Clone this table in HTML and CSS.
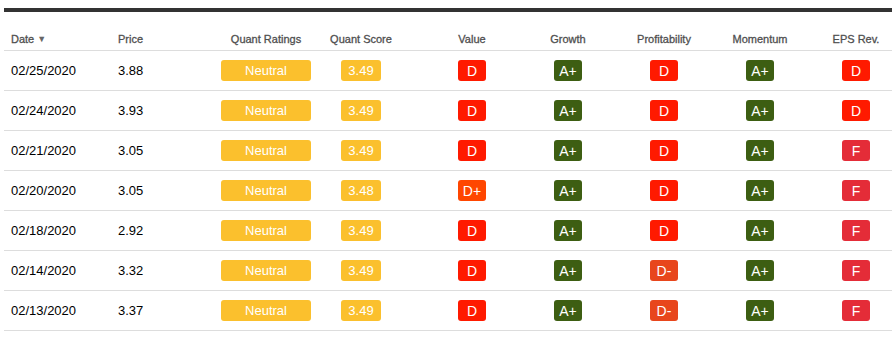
FILE: index.html
```html
<!DOCTYPE html>
<html>
<head>
<meta charset="utf-8">
<link rel="stylesheet" href="styles.css">
</head>
<body>
<div class="wrap">
  <div class="topbar"></div>
  <div class="grid head">
    <div class="cell left">Date <span class="caret">▼</span></div>
    <div class="cell left">Price</div>
    <div class="cell">Quant Ratings</div>
    <div class="cell qs">Quant Score</div>
    <div class="cell">Value</div>
    <div class="cell">Growth</div>
    <div class="cell">Profitability</div>
    <div class="cell">Momentum</div>
    <div class="cell">EPS Rev.</div>
  </div>

  <div class="grid row">
    <div class="cell left">02/25/2020</div><div class="cell left">3.88</div>
    <div class="cell"><span class="b neutral">Neutral</span></div>
    <div class="cell qs"><span class="b score">3.49</span></div>
    <div class="cell"><span class="b g d">D</span></div>
    <div class="cell"><span class="b g a">A+</span></div>
    <div class="cell"><span class="b g d">D</span></div>
    <div class="cell"><span class="b g a">A+</span></div>
    <div class="cell"><span class="b g d">D</span></div>
  </div>
  <div class="grid row">
    <div class="cell left">02/24/2020</div><div class="cell left">3.93</div>
    <div class="cell"><span class="b neutral">Neutral</span></div>
    <div class="cell qs"><span class="b score">3.49</span></div>
    <div class="cell"><span class="b g d">D</span></div>
    <div class="cell"><span class="b g a">A+</span></div>
    <div class="cell"><span class="b g d">D</span></div>
    <div class="cell"><span class="b g a">A+</span></div>
    <div class="cell"><span class="b g d">D</span></div>
  </div>
  <div class="grid row">
    <div class="cell left">02/21/2020</div><div class="cell left">3.05</div>
    <div class="cell"><span class="b neutral">Neutral</span></div>
    <div class="cell qs"><span class="b score">3.49</span></div>
    <div class="cell"><span class="b g d">D</span></div>
    <div class="cell"><span class="b g a">A+</span></div>
    <div class="cell"><span class="b g d">D</span></div>
    <div class="cell"><span class="b g a">A+</span></div>
    <div class="cell"><span class="b g f">F</span></div>
  </div>
  <div class="grid row">
    <div class="cell left">02/20/2020</div><div class="cell left">3.05</div>
    <div class="cell"><span class="b neutral">Neutral</span></div>
    <div class="cell qs"><span class="b score">3.48</span></div>
    <div class="cell"><span class="b g dp">D+</span></div>
    <div class="cell"><span class="b g a">A+</span></div>
    <div class="cell"><span class="b g d">D</span></div>
    <div class="cell"><span class="b g a">A+</span></div>
    <div class="cell"><span class="b g f">F</span></div>
  </div>
  <div class="grid row">
    <div class="cell left">02/18/2020</div><div class="cell left">2.92</div>
    <div class="cell"><span class="b neutral">Neutral</span></div>
    <div class="cell qs"><span class="b score">3.49</span></div>
    <div class="cell"><span class="b g d">D</span></div>
    <div class="cell"><span class="b g a">A+</span></div>
    <div class="cell"><span class="b g d">D</span></div>
    <div class="cell"><span class="b g a">A+</span></div>
    <div class="cell"><span class="b g f">F</span></div>
  </div>
  <div class="grid row">
    <div class="cell left">02/14/2020</div><div class="cell left">3.32</div>
    <div class="cell"><span class="b neutral">Neutral</span></div>
    <div class="cell qs"><span class="b score">3.49</span></div>
    <div class="cell"><span class="b g d">D</span></div>
    <div class="cell"><span class="b g a">A+</span></div>
    <div class="cell"><span class="b g dm">D-</span></div>
    <div class="cell"><span class="b g a">A+</span></div>
    <div class="cell"><span class="b g f">F</span></div>
  </div>
  <div class="grid row">
    <div class="cell left">02/13/2020</div><div class="cell left">3.37</div>
    <div class="cell"><span class="b neutral">Neutral</span></div>
    <div class="cell qs"><span class="b score">3.49</span></div>
    <div class="cell"><span class="b g d">D</span></div>
    <div class="cell"><span class="b g a">A+</span></div>
    <div class="cell"><span class="b g dm">D-</span></div>
    <div class="cell"><span class="b g a">A+</span></div>
    <div class="cell"><span class="b g f">F</span></div>
  </div>
</div>
</body>
</html>
```

FILE: styles.css
```css
html, body {
  margin: 0;
  padding: 0;
  background: #fff;
}
body {
  font-family: "Liberation Sans", Arial, sans-serif;
}
.wrap {
  padding: 8px 0 0 4px;
}
.topbar {
  height: 4px;
  background: #333333;
}
.grid {
  width: 888px;
  display: grid;
  grid-template-columns: 107px 107px 96px 110px repeat(5, 96px);
  overflow: hidden;
  border-bottom: 1px solid #dddddd;
}
.cell {
  display: flex;
  justify-content: center;
  align-items: center;
  white-space: nowrap;
}
.cell.left {
  justify-content: flex-start;
  padding-left: 7px;
}
.cell.qs {
  padding-right: 16px;
}
.head {
  height: 38px;
  font-size: 11px;
  color: #4f4f4f;
  -webkit-text-stroke: 0.3px #4f4f4f;
}
.head .cell {
  align-items: flex-end;
  padding-bottom: 4px;
  line-height: 13px;
}
.caret {
  font-size: 9px;
  margin-left: 3px;
  color: #666;
  -webkit-text-stroke: 0;
}
.row {
  height: 39px;
  font-size: 13px;
  color: #000000;
}
.b {
  display: inline-flex;
  justify-content: center;
  align-items: center;
  height: 21px;
  border-radius: 3px;
  color: #ffffff;
  font-size: 13px;
  box-sizing: border-box;
}
.neutral {
  width: 90px;
  background: #fbc02d;
}
.score {
  width: 40px;
  background: #fbc02d;
}
.g {
  width: 28px;
  font-size: 14px;
}
.d { background: #ff1a00; }
.dp { background: #ff4600; }
.dm { background: #e8461c; }
.f { background: #e42c38; }
.a { background: #3d5e12; }
```
